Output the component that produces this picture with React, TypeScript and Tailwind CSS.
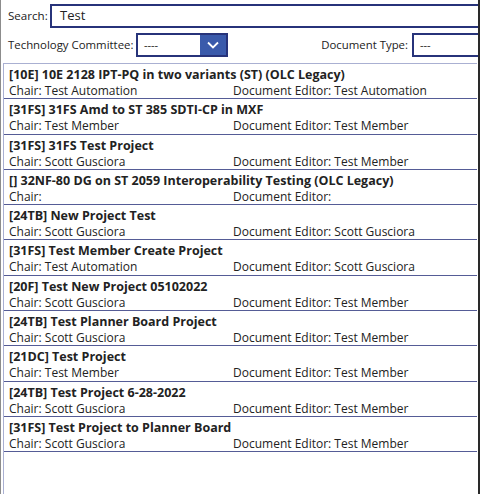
import React from "react";

const items = [
  ["[10E] 10E 2128 IPT-PQ in two variants (ST) (OLC Legacy)", "Test Automation", "Test Automation"],
  ["[31FS] 31FS Amd to ST 385 SDTI-CP in MXF", "Test Member", "Test Member"],
  ["[31FS] 31FS Test Project", "Scott Gusciora", "Test Member"],
  ["[] 32NF-80 DG on ST 2059 Interoperability Testing (OLC Legacy)", "", ""],
  ["[24TB] New Project Test", "Scott Gusciora", "Scott Gusciora"],
  ["[31FS] Test Member Create Project", "Test Automation", "Scott Gusciora"],
  ["[20F] Test New Project 05102022", "Scott Gusciora", "Test Member"],
  ["[24TB] Test Planner Board Project", "Scott Gusciora", "Test Member"],
  ["[21DC] Test Project", "Test Member", "Test Member"],
  ["[24TB] Test Project 6-28-2022", "Scott Gusciora", "Test Member"],
  ["[31FS] Test Project to Planner Board", "Scott Gusciora", "Test Member"],
];

export default function App() {
  return (
    <div
      className="w-[480px] h-[494px] overflow-hidden bg-white border-l border-l-[#8c8c8c] border-r-2 border-r-[#2a2a2a] flex flex-col text-[#222]"
      style={{ fontFamily: '"Open Sans", "Noto Sans", sans-serif' }}
    >
      <div className="flex items-center h-[24px] mt-[4px]">
        <span className="w-[49px] pl-[7px] text-[11.6px]">Search:</span>
        <div className="flex-1 h-[24px] border-2 border-[#27337a] mr-[-20px] pl-[8px] flex items-center text-[13px]">Test</div>
      </div>
      <div className="flex items-center h-[24px] mt-[5px]">
        <span className="w-[135px] pl-[7px] text-[11.4px] whitespace-nowrap">Technology Committee:</span>
        <div className="w-[92px] h-[24px] border-2 border-[#27337a] flex">
          <div className="flex-1 pl-[6px] flex items-center text-[11px]">----</div>
          <div className="w-[26px] bg-[#3a5aab] flex items-center justify-center">
            <svg width="12" height="8" viewBox="0 0 12 8">
              <path d="M1 1.5 L6 6.5 L11 1.5" fill="none" stroke="white" strokeWidth="1.8" />
            </svg>
          </div>
        </div>
        <span className="ml-auto pr-[4px] text-[11.4px]">Document Type:</span>
        <div className="w-[70px] h-[24px] border-2 border-[#27337a] mr-[-4px] pl-[6px] flex items-center text-[11px]">---</div>
      </div>
      <div className="mt-[6px] ml-[2px] mr-[1px] flex-1 border-t border-l border-[#aab0d2] flex flex-col">
        {items.map(([t, c, d], i) => (
          <div key={i} className="h-[35.3px] shrink-0 border-b-[1.5px] border-[#555c96] pl-[5px] pt-[3px] flex flex-col">
            <div className="text-[12.5px] font-bold leading-[16px] whitespace-nowrap">{t}</div>
            <div className="flex text-[12px] leading-[15px] whitespace-nowrap">
              <span className="w-[224px]">Chair: {c}</span>
              <span>Document Editor: {d}</span>
            </div>
          </div>
        ))}
      </div>
    </div>
  );
}
